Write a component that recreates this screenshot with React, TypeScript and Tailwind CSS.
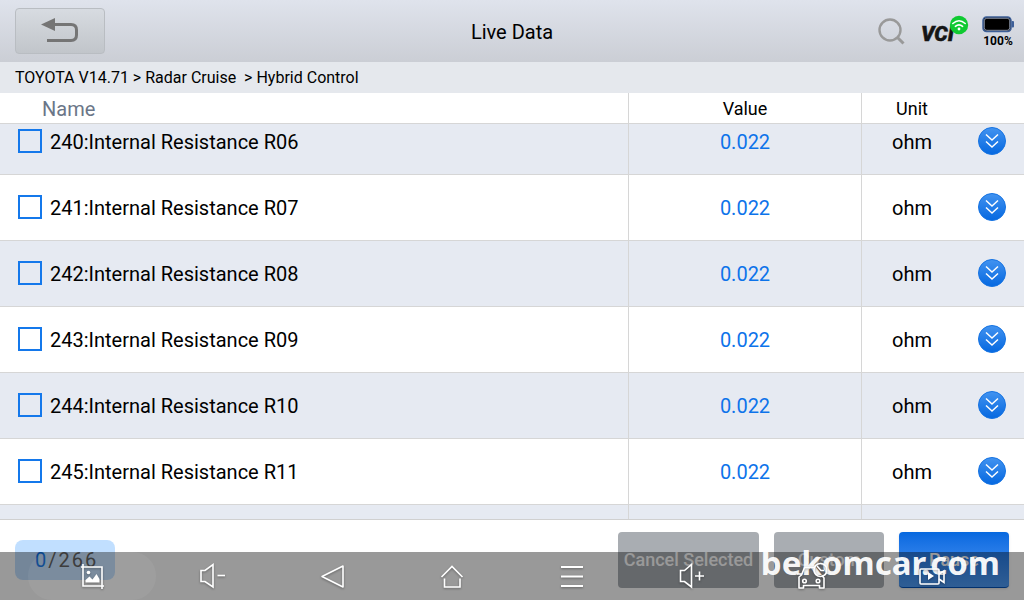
import { useEffect, useRef, useState } from "react";
import type { ReactNode } from "react";

const rows = [
  { id: 240, name: "Internal Resistance R06", value: "0.022", unit: "ohm" },
  { id: 241, name: "Internal Resistance R07", value: "0.022", unit: "ohm" },
  { id: 242, name: "Internal Resistance R08", value: "0.022", unit: "ohm" },
  { id: 243, name: "Internal Resistance R09", value: "0.022", unit: "ohm" },
  { id: 244, name: "Internal Resistance R10", value: "0.022", unit: "ohm" },
  { id: 245, name: "Internal Resistance R11", value: "0.022", unit: "ohm" },
  { id: 246, name: "Internal Resistance R12", value: "0.022", unit: "ohm" },
];

const TOTAL = 266;

function Header() {
  return (
    <header className="grid h-[62px] shrink-0 grid-cols-[1fr_auto_1fr] items-center bg-linear-to-b from-[#dfe3ec] to-[#cbced5] px-2.5">
      <button
        aria-label="Back"
        className="ml-[5px] flex h-[46px] w-[90px] items-center justify-center rounded-sm border border-[#b9bdc2] bg-linear-to-b from-[#d7dbe1] to-[#c1c5ca]"
      >
        <svg width="38" height="26" viewBox="0 0 38 26" fill="none">
          <path d="M14 6.5H30Q35.5 6.5 35.5 12V17Q35.5 22.5 30 22.5H6" stroke="#757575" strokeWidth="3" />
          <path d="M0 6.5L14 0V13Z" fill="#757575" />
        </svg>
      </button>
      <h1 className="pt-0.5 text-xl text-black">Live Data</h1>
      <div className="flex items-center justify-end gap-3">
        <button aria-label="Search">
          <svg width="30" height="30" viewBox="0 0 30 30" fill="none" stroke="#999" strokeWidth="2.4">
            <circle cx="14" cy="14" r="10.5" />
            <path d="M21.5 21.5L27.5 27.5" strokeWidth="3" />
          </svg>
        </button>
        <svg width="52" height="34" viewBox="0 0 52 34" role="img" aria-label="VCI connected">
          <text x="3" y="27" fontSize="21" fontWeight="900" fontStyle="italic" fill="#151515" stroke="#151515" strokeWidth="0.5">
            VCI
          </text>
          <circle cx="41" cy="11" r="9.2" fill="#0fca32" />
          <g fill="none" stroke="#fff" strokeWidth="1.6" strokeLinecap="round">
            <path d="M34.8 9.5Q41 4 47.2 9.5" />
            <path d="M37.4 12.3Q41 9.3 44.6 12.3" />
          </g>
          <circle cx="41" cy="15" r="1.4" fill="#fff" />
        </svg>
        <div className="flex w-8 flex-col items-center pt-0.5">
          <svg width="32" height="17" viewBox="0 0 32 17">
            <rect x="1" y="1" width="28" height="14.5" rx="3.5" fill="#000" stroke="#3d5f98" strokeWidth="1.5" />
            <rect x="2.3" y="2.3" width="25.4" height="12" rx="2.5" fill="none" stroke="#b7c4dc" strokeWidth=".7" />
            <rect x="29.5" y="5" width="2.5" height="6.5" rx="1" fill="#3d5f98" />
          </svg>
          <span className="text-xs font-bold">100%</span>
        </div>
      </div>
    </header>
  );
}

function ExpandIcon({ id }: { id: number }) {
  return (
    <svg width="28" height="28" viewBox="0 0 28 28" fill="none">
      <defs>
        <linearGradient id={`expand-${id}`} x1="0" y1="0" x2="0" y2="1">
          <stop stopColor="#4293f0" />
          <stop offset="1" stopColor="#0568e0" />
        </linearGradient>
      </defs>
      <circle cx="14" cy="14" r="13.5" fill={`url(#expand-${id})`} stroke="#1673e2" />
      <path d="M8 7.5L14 13L20 7.5M8 14.5L14 20L20 14.5" stroke="#fff" strokeWidth="1.5" />
    </svg>
  );
}

type DataTableProps = {
  selected: number[];
  onToggle: (id: number) => void;
};

function DataTable({ selected, onToggle }: DataTableProps) {
  const scrollRef = useRef<HTMLDivElement>(null);

  useEffect(() => {
    if (scrollRef.current) scrollRef.current.scrollTop = 15;
  }, []);

  return (
    <div ref={scrollRef} className="min-h-0 flex-1 overflow-y-auto [scrollbar-width:none]">
      <table className="w-full table-fixed border-separate border-spacing-0">
        <thead className="sticky top-0 z-10 bg-white">
          <tr className="h-[31px] text-lg [&>th]:border-b [&>th]:border-[#d6d6d6] [&>th]:p-0 [&>th]:pt-0.5 [&>th]:leading-7 [&>th]:font-normal">
            <th className="border-r text-left text-xl text-[#6b7688]">
              <span className="pl-[42px]">Name</span>
            </th>
            <th className="w-[233px] border-r">Value</th>
            <th className="w-[100px]">Unit</th>
            <th className="w-[62px]" aria-label="Details" />
          </tr>
        </thead>
        <tbody>
          {rows.map((row) => (
            <tr
              key={row.id}
              className="h-[66px] text-xl odd:bg-[#e6eaf2] even:bg-white [&>td]:border-b [&>td]:border-[#d6d6d6] [&>td]:p-0"
            >
              <td className="border-r">
                <label className="flex items-center gap-2 pl-[18px]">
                  <input
                    type="checkbox"
                    checked={selected.includes(row.id)}
                    onChange={() => onToggle(row.id)}
                    className="mb-0.5 size-6 appearance-none border-2 border-[#1478eb] checked:bg-[#1478eb]"
                  />
                  <span>
                    {row.id}:{row.name}
                  </span>
                </label>
              </td>
              <td className="border-r text-center text-[#0d73ea]">{row.value}</td>
              <td className="text-center">{row.unit}</td>
              <td>
                <button aria-label={`Expand ${row.id}`} className="mb-0.5 ml-4 block">
                  <ExpandIcon id={row.id} />
                </button>
              </td>
            </tr>
          ))}
        </tbody>
      </table>
    </div>
  );
}

type NavButtonProps = {
  label: string;
  active?: boolean;
  children: ReactNode;
};

function NavButton({ label, active, children }: NavButtonProps) {
  return (
    <button aria-label={label} className="relative flex h-12 flex-1 items-center justify-center">
      {active && <span className="absolute inset-y-0 -right-1 -left-1 rounded-full bg-white/5" />}
      <svg
        width="30"
        height="30"
        viewBox="0 0 30 30"
        fill="none"
        stroke="#fff"
        strokeWidth="1.6"
        className="drop-shadow-[0_1px_1px_rgba(0,0,0,0.35)]"
      >
        {children}
      </svg>
    </button>
  );
}

function SystemNav() {
  return (
    <nav className="absolute inset-x-0 bottom-0 flex bg-black/40 px-8">
      <span className="absolute right-6 bottom-3 text-[33px] leading-[50px] font-bold text-white/95 [font-family:'Noto_Sans','Open_Sans',sans-serif]">
        bekomcar.com
      </span>
      <NavButton label="Screenshot" active>
        <path d="M4 6H25V28M6 3V25H27" />
        <circle cx="11.5" cy="11.5" r="1.8" fill="#fff" stroke="none" />
        <path d="M8.5 21.5V19L12.5 15.5L15.5 18.5L19.5 13L22.5 18V21.5Z" fill="#fff" stroke="none" />
      </NavButton>
      <NavButton label="Volume down">
        <path d="M4 9.5H8L16 3.5V26L8 20.5H4V9.5Z" />
        <path d="M20.5 14.5H28" />
      </NavButton>
      <NavButton label="Back">
        <path d="M26 5V26L5 15.5Z" strokeLinejoin="round" />
      </NavButton>
      <NavButton label="Home">
        <path d="M4.5 16L15 5.5L25.5 16M7.5 17.5V26H23V17.5" />
      </NavButton>
      <NavButton label="Menu">
        <path d="M4 6H26M4 15.5H26M4 25H26" strokeWidth="2" />
      </NavButton>
      <NavButton label="Volume up">
        <path d="M3.5 9.5H7.5L14.5 3.5V26L7.5 20.5H3.5V9.5Z" />
        <path d="M18 15H27M22.5 10.5V19.5" />
      </NavButton>
      <NavButton label="Vehicle">
        <path d="M17 6.5H7.5L4.5 14L2 16V27H6.5V24.5H22.5V27H27V17L25 14.5M0 13H4.5" strokeLinejoin="round" />
        <circle cx="7.5" cy="20" r="1.8" />
        <circle cx="21" cy="20" r="1.8" />
        <circle cx="23.5" cy="9" r="6.5" />
        <path d="M20 5L24 9.5H27" />
      </NavButton>
      <NavButton label="Record screen">
        <rect x="3" y="8" width="19" height="15" rx="1" />
        <path d="M22 13L27 10V21.5L22 18" />
        <path d="M11 11L17 15L11 19Z" fill="#fff" stroke="none" />
      </NavButton>
    </nav>
  );
}

export default function App() {
  const [selected, setSelected] = useState<number[]>([]);
  const [paused, setPaused] = useState(false);

  const toggle = (id: number) => {
    setSelected((prev) => (prev.includes(id) ? prev.filter((item) => item !== id) : [...prev, id]));
  };

  return (
    <div className="relative flex h-screen flex-col overflow-hidden bg-white font-[Roboto,sans-serif] text-black">
      <Header />
      <div className="h-[31px] shrink-0 bg-[#e5e8ed] px-[15px] text-base leading-[31px] whitespace-pre">
        {"TOYOTA V14.71 > Radar Cruise  > Hybrid Control"}
      </div>
      <DataTable selected={selected} onToggle={toggle} />
      <footer className="flex h-[81px] shrink-0 items-center gap-[15px] border-t border-[#d0d0d0] px-[15px]">
        <div className="mr-auto flex h-10 w-[100px] items-center rounded-lg bg-[#c1dfff] pl-5 text-xl tracking-widest text-[#555]">
          <span className="text-[#0d73ea]">{selected.length}</span>/{TOTAL}
        </div>
        <button
          onClick={() => setSelected([])}
          className="h-14 w-[141px] rounded-sm bg-[#a9adb2] text-lg font-medium whitespace-nowrap text-white"
        >
          Cancel Selected
        </button>
        <button className="h-14 w-[110px] rounded-sm bg-[#a9adb2] text-lg font-medium text-white">Custom</button>
        <button
          onClick={() => setPaused(!paused)}
          className="h-14 w-[110px] rounded-sm border-b border-[#0453b8] bg-linear-to-b from-[#0568df] to-[#4f9df8] text-lg font-medium text-white shadow-sm"
        >
          {paused ? "Resume" : "Pause"}
        </button>
      </footer>
      <SystemNav />
    </div>
  );
}
